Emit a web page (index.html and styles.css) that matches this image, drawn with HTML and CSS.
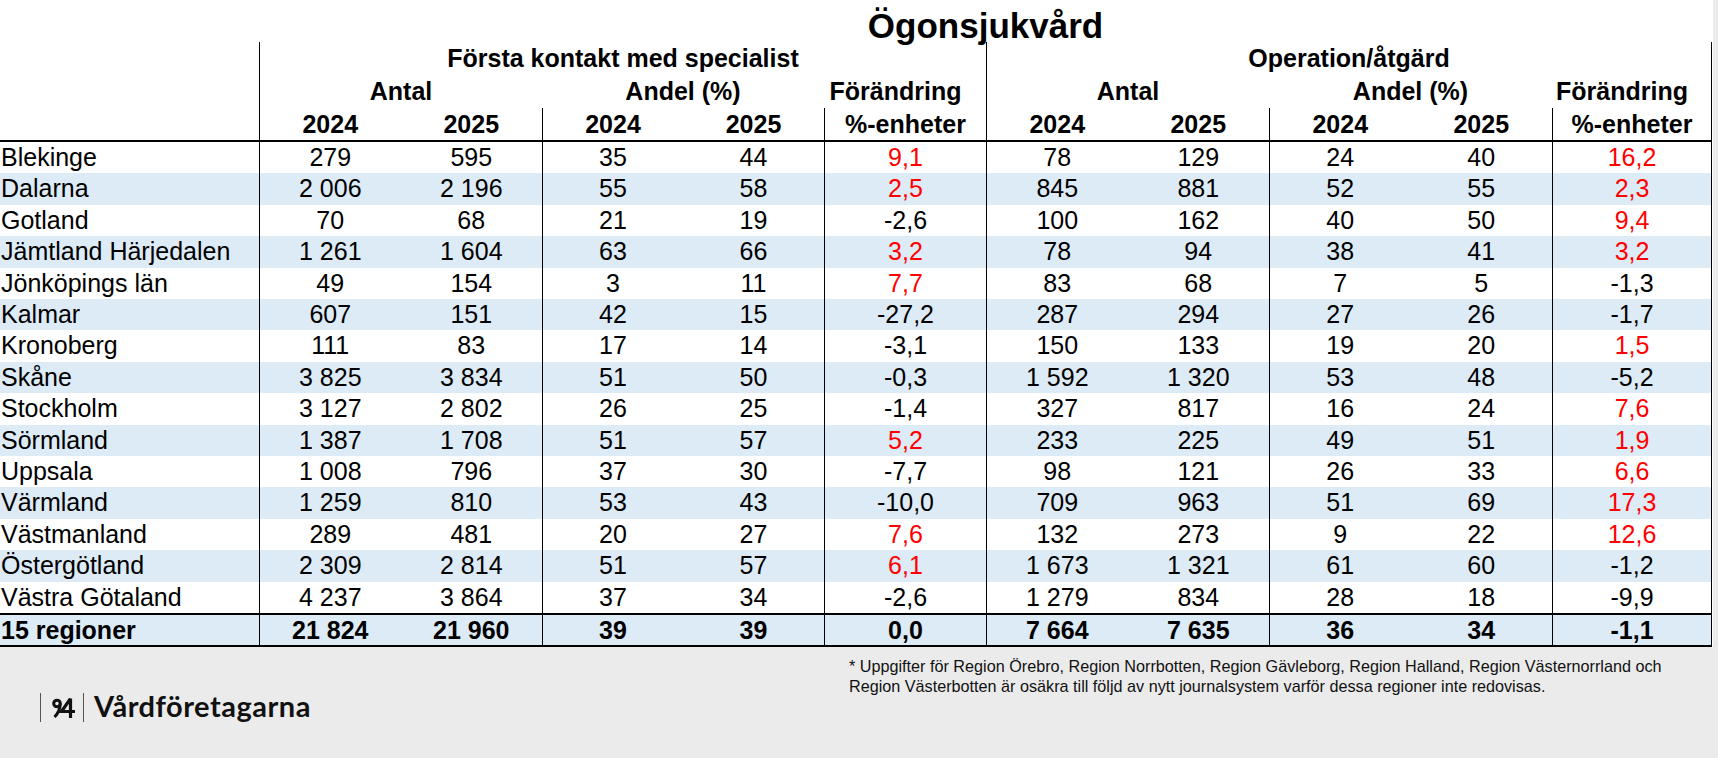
FILE: index.html
```html
<!DOCTYPE html>
<html lang="sv">
<head>
<meta charset="utf-8">
<title>Ögonsjukvård</title>
<link rel="stylesheet" href="styles.css">
</head>
<body>
<div class="sheet">
<table class="data">
<colgroup>
<col class="c-label"><col class="c-a"><col class="c-a"><col class="c-p"><col class="c-p"><col class="c-chg1"><col class="c-a"><col class="c-a"><col class="c-a"><col class="c-a"><col class="c-chg2">
</colgroup>
<thead>
<tr class="r-title"><td></td><th colspan="10" class="title">Ögonsjukvård</th></tr>
<tr class="r-h1"><td></td><th colspan="5" class="bl">Första kontakt med specialist</th><th colspan="5" class="bl br">Operation/åtgärd</th></tr>
<tr class="r-h2"><td></td><th colspan="2" class="bl">Antal</th><th colspan="2">Andel (%)</th><th class="chg">Förändring</th><th colspan="2" class="bl">Antal</th><th colspan="2">Andel (%)</th><th class="chg br">Förändring</th></tr>
<tr class="r-h3"><td></td><th class="bl">2024</th><th>2025</th><th class="bl">2024</th><th>2025</th><th class="bl">%-enheter</th><th class="bl">2024</th><th>2025</th><th class="bl">2024</th><th>2025</th><th class="bl br">%-enheter</th></tr>
</thead>
<tbody>
<tr><td class="lbl">Blekinge</td><td class="bl">279</td><td>595</td><td class="bl">35</td><td>44</td><td class="bl up">9,1</td><td class="bl">78</td><td>129</td><td class="bl">24</td><td>40</td><td class="bl br up">16,2</td></tr>
<tr class="alt"><td class="lbl">Dalarna</td><td class="bl">2 006</td><td>2 196</td><td class="bl">55</td><td>58</td><td class="bl up">2,5</td><td class="bl">845</td><td>881</td><td class="bl">52</td><td>55</td><td class="bl br up">2,3</td></tr>
<tr><td class="lbl">Gotland</td><td class="bl">70</td><td>68</td><td class="bl">21</td><td>19</td><td class="bl">-2,6</td><td class="bl">100</td><td>162</td><td class="bl">40</td><td>50</td><td class="bl br up">9,4</td></tr>
<tr class="alt"><td class="lbl">Jämtland Härjedalen</td><td class="bl">1 261</td><td>1 604</td><td class="bl">63</td><td>66</td><td class="bl up">3,2</td><td class="bl">78</td><td>94</td><td class="bl">38</td><td>41</td><td class="bl br up">3,2</td></tr>
<tr><td class="lbl">Jönköpings län</td><td class="bl">49</td><td>154</td><td class="bl">3</td><td>11</td><td class="bl up">7,7</td><td class="bl">83</td><td>68</td><td class="bl">7</td><td>5</td><td class="bl br">-1,3</td></tr>
<tr class="alt"><td class="lbl">Kalmar</td><td class="bl">607</td><td>151</td><td class="bl">42</td><td>15</td><td class="bl">-27,2</td><td class="bl">287</td><td>294</td><td class="bl">27</td><td>26</td><td class="bl br">-1,7</td></tr>
<tr><td class="lbl">Kronoberg</td><td class="bl">111</td><td>83</td><td class="bl">17</td><td>14</td><td class="bl">-3,1</td><td class="bl">150</td><td>133</td><td class="bl">19</td><td>20</td><td class="bl br up">1,5</td></tr>
<tr class="alt"><td class="lbl">Skåne</td><td class="bl">3 825</td><td>3 834</td><td class="bl">51</td><td>50</td><td class="bl">-0,3</td><td class="bl">1 592</td><td>1 320</td><td class="bl">53</td><td>48</td><td class="bl br">-5,2</td></tr>
<tr><td class="lbl">Stockholm</td><td class="bl">3 127</td><td>2 802</td><td class="bl">26</td><td>25</td><td class="bl">-1,4</td><td class="bl">327</td><td>817</td><td class="bl">16</td><td>24</td><td class="bl br up">7,6</td></tr>
<tr class="alt"><td class="lbl">Sörmland</td><td class="bl">1 387</td><td>1 708</td><td class="bl">51</td><td>57</td><td class="bl up">5,2</td><td class="bl">233</td><td>225</td><td class="bl">49</td><td>51</td><td class="bl br up">1,9</td></tr>
<tr><td class="lbl">Uppsala</td><td class="bl">1 008</td><td>796</td><td class="bl">37</td><td>30</td><td class="bl">-7,7</td><td class="bl">98</td><td>121</td><td class="bl">26</td><td>33</td><td class="bl br up">6,6</td></tr>
<tr class="alt"><td class="lbl">Värmland</td><td class="bl">1 259</td><td>810</td><td class="bl">53</td><td>43</td><td class="bl">-10,0</td><td class="bl">709</td><td>963</td><td class="bl">51</td><td>69</td><td class="bl br up">17,3</td></tr>
<tr><td class="lbl">Västmanland</td><td class="bl">289</td><td>481</td><td class="bl">20</td><td>27</td><td class="bl up">7,6</td><td class="bl">132</td><td>273</td><td class="bl">9</td><td>22</td><td class="bl br up">12,6</td></tr>
<tr class="alt"><td class="lbl">Östergötland</td><td class="bl">2 309</td><td>2 814</td><td class="bl">51</td><td>57</td><td class="bl up">6,1</td><td class="bl">1 673</td><td>1 321</td><td class="bl">61</td><td>60</td><td class="bl br">-1,2</td></tr>
<tr><td class="lbl">Västra Götaland</td><td class="bl">4 237</td><td>3 864</td><td class="bl">37</td><td>34</td><td class="bl">-2,6</td><td class="bl">1 279</td><td>834</td><td class="bl">28</td><td>18</td><td class="bl br">-9,9</td></tr>
</tbody>
<tfoot>
<tr class="total"><td class="lbl">15 regioner</td><td class="bl">21 824</td><td>21 960</td><td class="bl">39</td><td>39</td><td class="bl">0,0</td><td class="bl">7 664</td><td>7 635</td><td class="bl">36</td><td>34</td><td class="bl br">-1,1</td></tr>
</tfoot>
</table>
</div>
<div class="foot">
  <div class="logo">
    <span class="bar"></span>
    <svg class="mark" width="23" height="20" viewBox="0 0 23 20" aria-hidden="true">
      <circle cx="5" cy="5.5" r="3.3" fill="none" stroke="#111" stroke-width="3"/>
      <path d="M8.2 5.5 C8.2 11.5 6 15.5 2.5 19" fill="none" stroke="#111" stroke-width="3"/>
      <path d="M18.5 0.5 L9.5 13.5 L23 13.5 M18.5 0.5 L18.5 20" fill="none" stroke="#111" stroke-width="3.2" stroke-linejoin="miter"/>
    </svg>
    <span class="bar"></span>
    <span class="brand">Vårdföretagarna</span>
  </div>
  <p class="note">* Uppgifter för Region Örebro, Region Norrbotten, Region Gävleborg, Region Halland, Region Västernorrland och<br>Region Västerbotten är osäkra till följd av nytt journalsystem varför dessa regioner inte redovisas.</p>
</div>
</body>
</html>
```

FILE: styles.css
```css
html, body {
  margin: 0;
  padding: 0;
}
body {
  background: #ebebeb;
  font-family: "Liberation Sans", Arial, sans-serif;
  color: #000;
}
.sheet {
  width: 1713px;
  background: #fff;
}
.data {
  width: 1712px;
  table-layout: fixed;
  border-collapse: separate;
  border-spacing: 0;
  font-size: 25px;
}
.c-label { width: 259px; }
.c-a { width: 141.5px; }
.c-p { width: 141px; }
.c-chg1 { width: 162px; }
.c-chg2 { width: 160px; }

.data td, .data th {
  padding: 0;
  white-space: nowrap;
  text-align: center;
  font-weight: normal;
  overflow: visible;
}
.data th { font-weight: bold; }

.data .title {
  font-size: 35px;
  line-height: 32px;
  padding-top: 10px;
  vertical-align: bottom;
}
.r-h1 th, .r-h1 td,
.r-h2 th, .r-h2 td {
  line-height: 33px;
}
.r-h3 th, .r-h3 td {
  line-height: 32px;
  border-bottom: 2px solid #000;
}
.data .chg { padding-right: 19px; }

.data .bl { border-left: 1px solid #000; }
.data .br { border-right: 1px solid #000; }

.data tbody td { line-height: 31.4px; }
.data .lbl {
  text-align: left;
  padding-left: 1px;
}
.data .alt td { background: #ddebf7; }
.data .up { color: #ff0000; }

.data .total td {
  background: #ddebf7;
  font-weight: bold;
  line-height: 30px;
  border-top: 2px solid #000;
  border-bottom: 2px solid #000;
}

.foot {
  display: grid;
  grid-template-columns: 849px auto;
}
.logo {
  display: flex;
  align-items: center;
  height: 29px;
  padding: 46px 0 0 40px;
}
.bar {
  width: 1px;
  height: 29px;
  background: #555;
}
.mark { margin: 0 8px 0 11px; }
.brand {
  margin-left: 10px;
  margin-bottom: 4px;
  font-family: Lato, "Open Sans", sans-serif;
  font-weight: 700;
  font-size: 29px;
  letter-spacing: 0.5px;
  line-height: 29px;
  color: #111;
}
.note {
  margin: 0;
  padding-top: 9px;
  font-size: 16.2px;
  line-height: 20px;
  color: #111;
}
```
